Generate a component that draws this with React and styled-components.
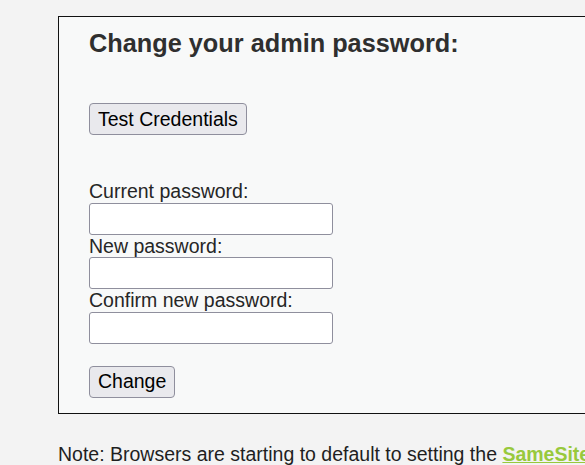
import styled, { createGlobalStyle } from 'styled-components';

const GlobalStyle = createGlobalStyle`
    html, body {
        margin: 0;
        padding: 0;
        background-color: #f3f3f3;
        overflow: hidden;
    }
    body {
        font-family: "Liberation Sans", Arial, sans-serif;
        color: #2b2b2b;
    }
`

export default function App() {
    return (
        <>
            <GlobalStyle />
            <Page>
                <Vulnerable>
                    <Heading>Change your admin password:</Heading>
                    <TestButton type="button">Test Credentials</TestButton>
                    <Form>
                        <Label htmlFor="cur">Current password:</Label>
                        <Input id="cur" type="password" />
                        <Label htmlFor="new">New password:</Label>
                        <Input id="new" type="password" />
                        <Label htmlFor="conf">Confirm new password:</Label>
                        <Input id="conf" type="password" />
                        <Submit type="submit">Change</Submit>
                    </Form>
                </Vulnerable>
                <Note>
                    Note: Browsers are starting to default to setting the{' '}
                    <Link href="#">SameSite cookie</Link> flag to Lax, and in doing so are killing off some types of CSRF attacks.
                </Note>
            </Page>
        </>
    );
}

const Page = styled.div`
    padding: 16px 0 0 58px;
`

const Vulnerable = styled.div`
    width: 600px;
    border: 1px solid #111;
    background-color: #f8f9f9;
    padding: 0 0 15px 30px;
`

const Heading = styled.h3`
    margin: 11px 0 0;
    font-size: 25.3px;
    line-height: 30px;
    font-weight: bold;
    color: #2f2f2f;
`

const Button = styled.button`
    display: block;
    height: 32px;
    padding: 0 8px;
    font-family: "Liberation Sans", Arial, sans-serif;
    font-size: 19.5px;
    color: #000;
    background-color: #e9e9ed;
    border: 1px solid #8f8f9d;
    border-radius: 4px;
`

const TestButton = styled(Button)`
    margin-top: 45px;
`

const Form = styled.form`
    display: flex;
    flex-direction: column;
    align-items: flex-start;
    margin-top: 45px;
`

const Label = styled.label`
    font-size: 19.5px;
    line-height: 22.5px;
    color: #262626;
`

const Input = styled.input`
    box-sizing: border-box;
    width: 244px;
    height: 32px;
    margin: 0;
    background: #fff;
    border: 1px solid #8f8f9d;
    border-radius: 3px;
`

const Submit = styled(Button)`
    margin-top: 22px;
`

const Note = styled.p`
    margin: 29px 0 0;
    font-size: 19.5px;
    line-height: 22px;
    white-space: nowrap;
    color: #1f1f1f;
`

const Link = styled.a`
    color: #98c93c;
    font-weight: bold;
    text-decoration: underline;
`
